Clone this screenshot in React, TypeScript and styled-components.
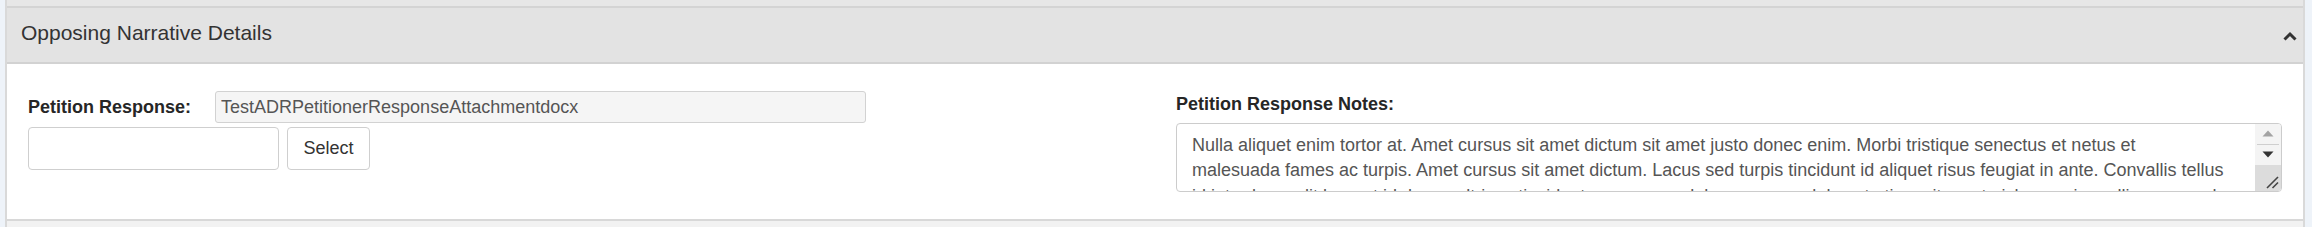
import React from "react";
import styled, { createGlobalStyle } from "styled-components";

const GlobalStyle = createGlobalStyle`
    html, body {
        margin: 0;
        padding: 0;
    }
    body {
        background: #eef3f9;
        font-family: "Liberation Sans", Arial, sans-serif;
    }
`;

const NOTES =
    "Nulla aliquet enim tortor at. Amet cursus sit amet dictum sit amet justo donec enim. Morbi tristique senectus et netus et\n" +
    "malesuada fames ac turpis. Amet cursus sit amet dictum. Lacus sed turpis tincidunt id aliquet risus feugiat in ante. Convallis tellus\n" +
    "id interdum velit laoreet id donec ultrices tincidunt arcu non sodales neque sodales ut etiam sit amet nisl purus in mollis nunc sed.";

const App: React.FC = () => {
    return (
        <>
            <GlobalStyle />
            <Page>
                <Stack>
                    <PrevTail />
                    <Header>
                        <Title>Opposing Narrative Details</Title>
                        <Chevron width="14" height="10" viewBox="0 0 14 10">
                            <polyline points="1.5,8.5 7,3 12.5,8.5" fill="none" stroke="#333" strokeWidth="3" />
                        </Chevron>
                    </Header>
                    <Body>
                        <Column>
                            <FieldRow>
                                <Label>Petition Response:</Label>
                                <ReadOnlyInput readOnly value="TestADRPetitionerResponseAttachmentdocx" />
                            </FieldRow>
                            <UploadRow>
                                <FileInput />
                                <SelectButton type="button">Select</SelectButton>
                            </UploadRow>
                        </Column>
                        <Column>
                            <NotesLabel>Petition Response Notes:</NotesLabel>
                            <NotesBox>
                                <NotesText readOnly value={NOTES} />
                                <ScrollRail>
                                    <ArrowButton>
                                        <svg width="12" height="7" viewBox="0 0 12 7">
                                            <polygon points="0.5,6.5 6,0.5 11.5,6.5" fill="#a3a3a3" />
                                        </svg>
                                    </ArrowButton>
                                    <RailDivider />
                                    <ArrowButton>
                                        <svg width="12" height="7" viewBox="0 0 12 7">
                                            <polygon points="0.5,0.5 11.5,0.5 6,6.5" fill="#333" />
                                        </svg>
                                    </ArrowButton>
                                    <Resizer>
                                        <svg width="14" height="14" viewBox="0 0 14 14">
                                            <line x1="2" y1="13" x2="13" y2="2" stroke="#444" strokeWidth="1.6" />
                                            <line x1="7.5" y1="13" x2="13" y2="7.5" stroke="#444" strokeWidth="1.6" />
                                        </svg>
                                    </Resizer>
                                </ScrollRail>
                            </NotesBox>
                        </Column>
                    </Body>
                    <NextHead />
                </Stack>
            </Page>
        </>
    );
};

const Page = styled.div`
    width: 2312px;
    height: 227px;
    overflow: hidden;
    box-sizing: border-box;
    padding: 0 7px 0 5px;
`;

const Stack = styled.div`
    height: 100%;
    display: flex;
    flex-direction: column;
    border-left: 2px solid #d9d9d9;
    border-right: 2px solid #d9d9d9;
`;

const PrevTail = styled.div`
    height: 6px;
    flex-shrink: 0;
    background: #e7e7e7;
    border-bottom: 2px solid #d4d4d4;
`;

const Header = styled.div`
    height: 56px;
    flex-shrink: 0;
    box-sizing: border-box;
    display: flex;
    justify-content: space-between;
    align-items: flex-start;
    padding: 0 6px 0 14px;
    background: #e3e3e3;
    border-bottom: 2px solid #d2d2d2;
`;

const Title = styled.div`
    margin-top: 13px;
    font-size: 21px;
    line-height: 23px;
    color: #333;
`;

const Chevron = styled.svg`
    margin-top: 23px;
    flex-shrink: 0;
`;

const Body = styled.div`
    height: 157px;
    flex-shrink: 0;
    box-sizing: border-box;
    display: grid;
    grid-template-columns: 1fr 1fr;
    background: #fff;
    border-bottom: 2px solid #d8d8d8;
`;

const Column = styled.div`
    padding: 27px 21px 0;
    min-width: 0;
`;

const FieldRow = styled.div`
    display: flex;
    align-items: center;
`;

const Label = styled.label`
    font-size: 18px;
    font-weight: 700;
    color: #262626;
    white-space: nowrap;
`;

const ReadOnlyInput = styled.input`
    margin-left: 24px;
    width: 651px;
    height: 32px;
    box-sizing: border-box;
    padding: 0 5px;
    border: 1px solid #d2d2d2;
    border-radius: 3px;
    background: #f5f5f5;
    font-family: "Liberation Sans", Arial, sans-serif;
    font-size: 18px;
    color: #555;
    outline: none;
`;

const UploadRow = styled.div`
    display: flex;
    gap: 8px;
    margin-top: 4px;
`;

const FileInput = styled.input`
    width: 251px;
    height: 43px;
    box-sizing: border-box;
    border: 1px solid #cfcfcf;
    border-radius: 4px;
    background: #fff;
    outline: none;
`;

const SelectButton = styled.button`
    width: 83px;
    height: 43px;
    box-sizing: border-box;
    border: 1px solid #cfcfcf;
    border-radius: 4px;
    background: #fff;
    font-family: "Liberation Sans", Arial, sans-serif;
    font-size: 18px;
    color: #333;
    padding: 0;
`;

const NotesLabel = styled.label`
    display: block;
    margin-top: 1px;
    margin-bottom: 5px;
    font-size: 18px;
    line-height: 25.7px;
    font-weight: 700;
    color: #262626;
`;

const NotesBox = styled.div`
    height: 69px;
    box-sizing: border-box;
    display: flex;
    border: 1px solid #cccccc;
    border-radius: 4px;
    overflow: hidden;
    background: #fff;
`;

const NotesText = styled.textarea`
    flex: 1;
    min-width: 0;
    border: none;
    outline: none;
    resize: none;
    overflow: hidden;
    padding: 9px 20px 0 15px;
    margin: 0;
    font-family: "Liberation Sans", Arial, sans-serif;
    font-size: 18px;
    line-height: 25.7px;
    color: #555;
    white-space: pre;
    background: transparent;
`;

const ScrollRail = styled.div`
    width: 26px;
    flex-shrink: 0;
    display: flex;
    flex-direction: column;
    background: #f4f4f4;
`;

const ArrowButton = styled.div`
    height: 20px;
    display: flex;
    align-items: center;
    justify-content: center;
`;

const RailDivider = styled.div`
    height: 1px;
    margin: 0 2px;
    background: #cfcfcf;
`;

const Resizer = styled.div`
    flex: 1;
    background: #dcdcdc;
    display: flex;
    align-items: flex-end;
    justify-content: flex-end;
    padding: 0 2px 2px 0;
`;

const NextHead = styled.div`
    flex: 1;
    background: #f2f2f2;
`;

export default App;
